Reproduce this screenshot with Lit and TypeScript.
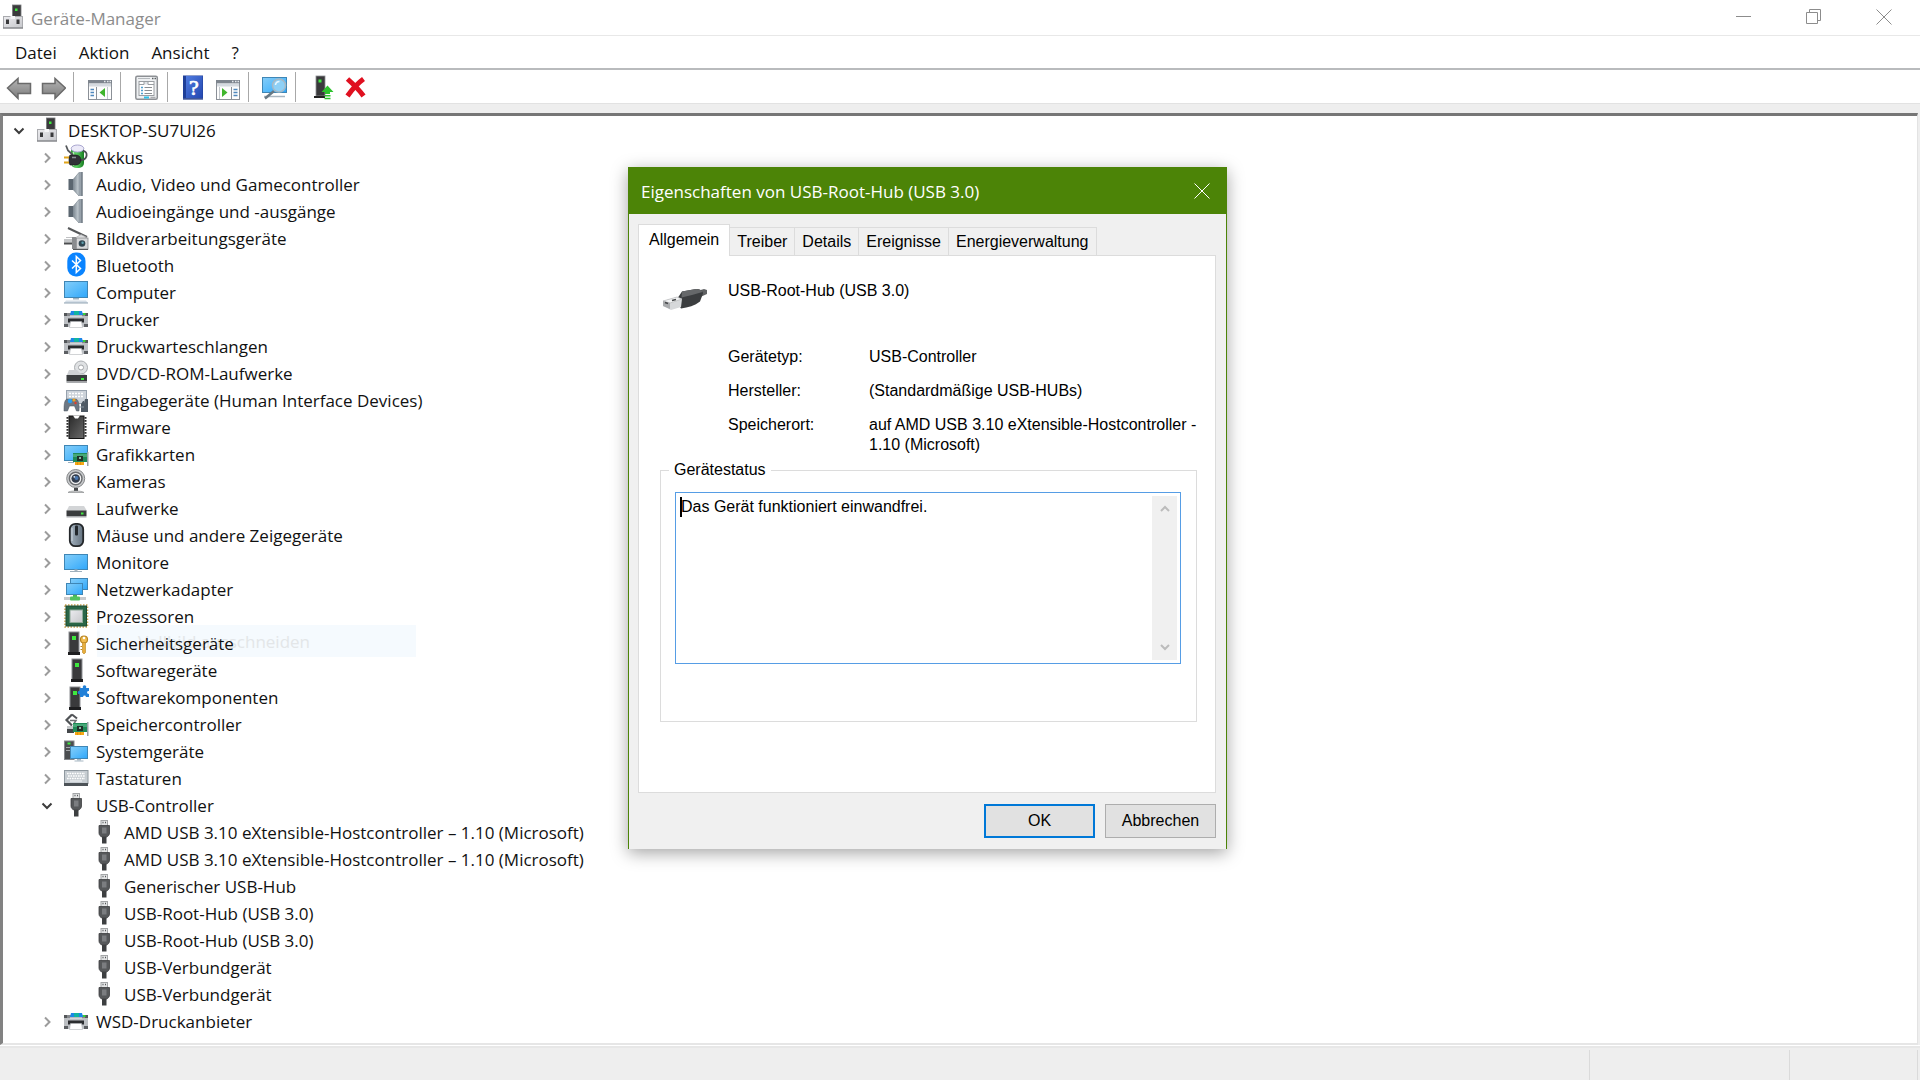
import { LitElement, html, svg, css, nothing, SVGTemplateResult, TemplateResult } from "lit";
import { customElement, state } from "lit/decorators.js";

/* ---------- shared icon parts ---------- */

const tower = (x: number, y: number): SVGTemplateResult => svg`
  <rect x=${x + 1} y=${y} width="10" height="21" fill="#3a3a3c" stroke="#8e9094"/>
  <rect x=${x} y=${y + 20} width="12" height="3" fill="#1e1e20"/>
  <rect x=${x + 4} y=${y + 4} width="4" height="4" fill="#3ee83e"/>`;

const monitor = (x: number, y: number, w: number, h: number): SVGTemplateResult => svg`
  <rect x=${x + 0.5} y=${y + 0.5} width=${w - 1} height=${h - 1} fill="url(#screen)" stroke="#3f86b5"/>`;

const card = (x: number, y: number): SVGTemplateResult => svg`
  <rect x=${x} y=${y} width="14" height="9" fill="#1f8a57"/>
  <path d=${`M${x} ${y + 1}h14v3h-14z`} fill="#46a878"/>
  <rect x=${x + 4} y=${y + 3} width="6" height="5" fill="#20302a"/>
  <rect x=${x + 6} y=${y + 4} width="2" height="2" fill="#8fb8a4"/>
  <rect x=${x + 14} y=${y - 1} width="1.5" height="14" fill="#9aa0a6"/>
  <rect x=${x + 2} y=${y + 9} width="9" height="3" fill="#f4a816"/>
  <path d=${`M${x + 4.5} ${y + 9}v3M${x + 7.5} ${y + 9}v3`} stroke="#d98200" stroke-width=".6"/>`;

/* ---------- tree icons, drawn on the full 24 x 27 row cell ---------- */

const icons: Record<string, SVGTemplateResult> = {
  pc: svg`
    <rect x="10.500" y="1" width="8.500" height="12" fill="#3b3b3d" stroke="#77797c" stroke-width=".8"/>
    <rect x="13" y="4.500" width="2.500" height="2.500" fill="#3ee83e"/>
    <rect x="1.500" y="12.500" width="19" height="11.500" fill="url(#silver)" stroke="#a9aaae"/>
    <path d="M1 24h20" stroke="#77787c"/>
    <rect x="4" y="15.500" width="3" height="4.500" fill="#3a3a3c"/>
    <rect x="14.500" y="15.500" width="3" height="4.500" fill="#3a3a3c"/>
    <path d="M8.500 12v3h4.500v-3" fill="#f6f6f8"/>`,
  battery: svg`
    <rect x="7" y="2" width="13" height="22" rx="5" fill="url(#green)"/>
    <ellipse cx="13.500" cy="4.500" rx="6.300" ry="3.500" fill="#eceaf8" stroke="#a9a6d0"/>
    <path d="M9.500 8v14" stroke="#b8f5b8" stroke-width="1.500"/>
    <path d="M2 1.500l2 5 5 4.500" fill="none" stroke="#55585c" stroke-width="1.800"/>
    <path d="M19 7c5 0 5 8-1 9h-4" fill="none" stroke="#4d5054" stroke-width="1.800"/>
    <path d="M6 11h6c3 0 5 2.500 5 5s-2 5-5 5H6l-1-2v-6z" fill="#303236" stroke="#17181a" stroke-width=".6"/>
    <path d="M8 13.500h4" stroke="#8c9096" stroke-width="1.500"/>
    <path d="M0 13.500h5M0 18.500h5" stroke="#e0a41a" stroke-width="2"/>`,
  speaker: svg`
    <rect x="4.500" y="8" width="5" height="11" fill="#5b6670"/>
    <path d="M9.500 8L15 1.500V25l-5.500-6z" fill="url(#steel)" stroke="#76828c" stroke-width=".6"/>
    <rect x="15" y="1" width="3.500" height="24" fill="#98a2ab"/>
    <path d="M18 1v24" stroke="#5d6770"/>`,
  imaging: svg`
    <path d="M4 3l19 9" stroke="#56585a" stroke-width="2"/>
    <path d="M2 12.500h10l5-3 6 3" fill="#dcdddf" stroke="#a6a8aa" stroke-width=".7"/>
    <rect x="0" y="14" width="8" height="3.500" fill="#c4c6c8"/>
    <rect x="0" y="17.500" width="8" height="2" fill="#4c4e50"/>
    <rect x="8" y="12" width="4" height="12" fill="#8a8c8f"/>
    <rect x="12.500" y="13" width="11.500" height="11" fill="#d6d7d9" stroke="#88898c" stroke-width=".8"/>
    <path d="M9 24.500h15" stroke="#55575a"/>
    <circle cx="18" cy="18.500" r="3.300" fill="#2f4550"/>
    <circle cx="18.600" cy="17.800" r="1.200" fill="#5fa0b0"/>`,
  bluetooth: svg`
    <rect x="3.300" y=".5" width="18.200" height="24" rx="8.500" fill="#0a84ff"/>
    <path d="M8 8.500l8.500 8-4.200 4V4.500l4.200 4L8 16.500" fill="none" stroke="#fff" stroke-width="1.500"/>`,
  computer: svg`
    ${monitor(0, 2, 24, 17)}
    <rect x="9" y="19" width="6" height="1.500" fill="#9fb2bf"/>
    <path d="M2 21.500h20l2 2.500H0z" fill="#d4dde6"/>
    <path d="M0 24h24" stroke="#93a5b4"/>`,
  printer: svg`
    <rect x="0" y="7" width="24" height="14" fill="#bcbfc3"/>
    <rect x="0" y="7" width="24" height="3" fill="#85888c"/>
    <rect x="0" y="7" width="3" height="3" fill="#54575a"/><rect x="21" y="7" width="3" height="3" fill="#54575a"/>
    <rect x="0" y="18" width="4" height="3" fill="#5c5f63"/><rect x="20" y="18" width="4" height="3" fill="#5c5f63"/>
    <path d="M6 9l1-4h11l1 4z" fill="#1c86e8"/>
    <path d="M10 5h5v4h-5z" fill="#12b4a0"/>
    <path d="M6 10h12" stroke="#e6eef4"/>
    <rect x="19" y="7" width="2.500" height="2" fill="#37d43b"/>
    <rect x="4" y="12.500" width="16" height="4" fill="#2b2d30"/>
    <path d="M6.500 15.500h11l1 6h-13z" fill="#fff" stroke="#b4b7ba" stroke-width=".6"/>`,
  dvd: svg`
    <circle cx="17" cy="7.500" r="6.500" fill="#dfe1e3" stroke="#a3a6a9" stroke-width=".9"/>
    <circle cx="17" cy="7.500" r="2.500" fill="#fff" stroke="#a3a6a9"/>
    <path d="M5 10h8l4 4h4l2 2H2.500z" fill="#cfd1d4"/>
    <rect x="2.500" y="15" width="20.500" height="6.500" fill="#3a3c3e"/>
    <rect x="2.500" y="21.500" width="20.500" height="1.500" fill="#a8aaad"/>
    <rect x="17" y="18" width="3" height="2" fill="#3ee83e"/>`,
  hid: svg`
    <rect x="2.500" y="3.500" width="20" height="13" fill="#cdd3da" stroke="#97a2ae"/>
    <path d="M5 6.500h15M5 9.500h15" stroke="#fff" stroke-width="1.500" stroke-dasharray="2 1"/>
    <path d="M3 12h9c3 1 3.500 7 3 12h-2.500l-2-5h-5l-2 5H0c0-5 0-11 3-12z" fill="#6c7783" stroke="#4b545e" stroke-width=".5"/>
    <circle cx="10" cy="13" r="1.600" fill="#f0a21e"/><circle cx="6" cy="14" r="2.200" fill="#2d9df0"/>
    <circle cx="11.500" cy="16" r="1.200" fill="#e03c2c"/>
    <path d="M17 25v-8l2-3h1v11zM20 25v-9l1-4h3v13z" fill="#4f5a65"/>
    <path d="M15 20h5" stroke="#8793a0"/>`,
  firmware: svg`
    <rect x="5" y="2" width="15" height="22.500" fill="url(#chip)" stroke="#141414"/>
    <path d="M9 1.500h7l-2 3h-3z" fill="#fff"/>
    <path d="M3.500 3v21M21.500 3v21" stroke="#2c2c2c" stroke-width="2" stroke-dasharray="1.700 1.300"/>`,
  display: svg`
    ${monitor(0, 4, 24, 16)}
    <path d="M4 21.500h6" stroke="#9ab0bf"/>
    ${card(9, 12)}`,
  camera: svg`
    <circle cx="11.700" cy="10.500" r="9" fill="#c9cbcd" stroke="#858789"/>
    <circle cx="11.700" cy="10.500" r="6.300" fill="#f2f2f3" stroke="#6b6d70" stroke-width="1.500"/>
    <circle cx="11.700" cy="10.500" r="4.300" fill="#333d4c"/>
    <circle cx="12.500" cy="10" r="2" fill="#4a77b0"/><circle cx="10.300" cy="8.800" r=".9" fill="#dbe9f7"/>
    <rect x="10" y="20" width="4" height="3" fill="#46484a"/>
    <path d="M4 24.500c1-2 14-2 16 0z" fill="#d7d8d9" stroke="#8e9092" stroke-width=".7"/>`,
  drive: svg`
    <path d="M5 11h15l3 5H2.500z" fill="#d3d5d7"/>
    <rect x="2.500" y="15.500" width="20" height="5.500" fill="#3a3c3e"/>
    <rect x="2.500" y="21" width="20" height="1.500" fill="#a8aaad"/>
    <rect x="17" y="17.500" width="2.500" height="2" fill="#3ee83e"/>`,
  mouse: svg`
    <rect x="5.800" y="1.800" width="13.400" height="22.400" rx="5.500" fill="url(#mouse)" stroke="#24272a" stroke-width="1.800"/>
    <rect x="11" y="3.500" width="3" height="10" rx="1" fill="#23282d"/>
    <path d="M8 6v13" stroke="#cdd6de"/>`,
  monitor: svg`
    ${monitor(0, 5, 24, 16)}
    <rect x="10.500" y="20.500" width="3" height="2" fill="#a7b7c3"/><path d="M6 22.500h12" stroke="#9fb0bc"/>`,
  network: svg`
    ${monitor(6, 2, 18, 12)}
    ${monitor(2, 7, 17, 12)}
    <rect x="9" y="19" width="4" height="3" fill="#48b854"/>
    <rect x="0" y="21" width="22" height="3" fill="#c9cbcd"/>
    <rect x="6" y="20.500" width="10" height="4" rx="1" fill="#52c25e"/>`,
  cpu: svg`
    <rect x="1" y="2" width="22.500" height="22" fill="none" stroke="#c9a04e" stroke-width="1.500" stroke-dasharray="1.500 1.500"/>
    <rect x="2" y="3" width="20.500" height="20" fill="#2a6647" stroke="#1b4d34"/>
    <rect x="6" y="7" width="12.500" height="12.500" fill="url(#silver)" stroke="#8faa9a"/>`,
  security: svg`
    ${tower(4, 2)}
    <circle cx="20" cy="9.500" r="3.500" fill="#f0bc50" stroke="#b88420" stroke-width="1.200"/>
    <circle cx="20" cy="8" r="1.200" fill="#fff"/>
    <path d="M18.500 12.500h3v10l-1.500 1.500-1.500-1.500z" fill="#e8ae3c" stroke="#b88420" stroke-width=".6"/>
    <path d="M18 16.500h-1.500M18 19.500h-1.500" stroke="#b88420"/>`,
  software: svg`${tower(7, 2)}`,
  component: svg`
    ${tower(5, 3)}
    <rect x="16" y="4" width="9" height="9" fill="#2080d8"/>
    <circle cx="20.500" cy="3" r="1.800" fill="#2080d8"/><circle cx="15.500" cy="8.500" r="1.800" fill="#2080d8"/>
    <circle cx="24.500" cy="8.500" r="1.400" fill="#fff"/><circle cx="20.500" cy="13" r="1.400" fill="#fff"/>`,
  storage: svg`
    <path d="M8 3.500L2.500 9 8 14.500" fill="none" stroke="#505356" stroke-width="2.200"/>
    <path d="M8 3.500l5 4" stroke="#505356" stroke-width="2"/>
    <path d="M6 9.500h6l-2 3" fill="none" stroke="#6f7275" stroke-width="1.500"/>
    <path d="M3 15h6v4H3z" fill="#c3c6c8"/><rect x="3" y="18" width="7" height="4" fill="#44474a"/>
    ${card(9, 12)}`,
  system: svg`
    <rect x=".5" y="3" width="9.500" height="18.500" fill="#4b4d50" stroke="#85888c"/>
    <rect x="3.500" y="4.500" width="3" height="2" fill="#3ee83e"/><path d="M2 9.500h5M2 12.500h4" stroke="#a4a7aa"/>
    ${monitor(6, 8, 18, 13)}
    <rect x="13" y="21" width="4" height="1.500" fill="#a7b7c3"/><path d="M10.500 23h9" stroke="#a7b7c3"/>`,
  keyboard: svg`
    <rect x=".5" y="5.500" width="23.500" height="13" fill="#c7cdd2" stroke="#8f989f"/>
    <path d="M3 8.500h18M4 11h17M3 13.500h18" stroke="#fff" stroke-width="1.400" stroke-dasharray="1.700 .8"/>
    <path d="M6 16h12" stroke="#f4f6f8"/>
    <rect x="0" y="18" width="24" height="3" fill="#4d5358"/>`,
  usb: svg`
    <rect x="9" y="1.500" width="6.500" height="6" fill="#e3e4e5" stroke="#a3a5a7"/>
    <path d="M10.500 3.500h1M13 3.500h1" stroke="#55575a" stroke-width="1.500"/>
    <path d="M7 6.500h10.500v7.500c0 2-1.500 3.500-3 4H10c-1.500-.5-3-2-3-4z" fill="#56585a" stroke="#3c3e40" stroke-width=".8"/>
    <rect x="10" y="8.500" width="4.500" height="6" fill="#7b7d80"/>
    <rect x="10" y="18" width="4.500" height="6.500" fill="#3d3f41"/>`,
};

/* ---------- toolbar icons on a 26 x 26 cell ---------- */

const arrow = svg`<path d="M1.500 13L12 3.500v5h12.500v10H12v5z" fill="url(#grayarrow)" stroke="#6a6a6a" stroke-width="1.500"/>`;

const pane = (toLeft: boolean): SVGTemplateResult => svg`
  <rect x="1.500" y="5.500" width="23" height="19" fill="#fdfdfd" stroke="#8b9097"/>
  <rect x="1" y="5" width="24" height="3.500" fill="#7e858e"/>
  <path d="M17 6.500h1.500M20 6.500h1.500M22.500 6.500h1.500" stroke="#e4e8ec" stroke-width="1.500"/>
  <rect x="2" y="8.500" width="22" height="3" fill="#d5dae0"/>
  <path d=${toLeft ? "M9.500 12v12" : "M16.500 12v12"} stroke="#8b9097"/>
  <path d=${toLeft ? "M3.500 14.500H7M3.500 17.500H7M3.500 20.500H7" : "M18.500 14.500h4M18.500 17.500h4M18.500 20.500h4"} stroke="#4f88bd" stroke-width="1.500"/>
  <path d=${toLeft ? "M18 13v9l-5.500-4.500z" : "M7 13v9l5.500-4.500z"} fill="#3fb52c"/>
  ${toLeft ? svg`<path d="M20.500 12v12" stroke="#c2c7cc"/>` : svg`<path d="M4.500 12v12" stroke="#c2c7cc"/>`}`;

const tools: Record<string, SVGTemplateResult> = {
  back: arrow,
  forward: svg`<g transform="matrix(-1 0 0 1 27 0)">${arrow}</g>`,
  paneLeft: pane(true),
  paneRight: pane(false),
  properties: svg`
    <rect x="1.800" y="1.300" width="21.500" height="23" rx="1.500" fill="#eef0f2" stroke="#8d9094" stroke-width="1.500"/>
    <path d="M4 3.500h12" stroke="#b5b9bd"/><path d="M18 3.500h1.500M20.500 3.500H22" stroke="#5c6064" stroke-width="1.500"/>
    <rect x="5" y="6.500" width="15" height="14" fill="#fff" stroke="#9a9ea2"/>
    <path d="M5 9.500h5V6.500h4v3h6" fill="#dfe2e5" stroke="#9a9ea2"/>
    <path d="M7 12.500h2M7 15.500h2M7 18.500h2" stroke="#4f9fd0" stroke-width="1.300"/>
    <path d="M10.500 12.500H18M10.500 15.500H18M10.500 18.500H18" stroke="#8a8e92"/>
    <path d="M10 22.500h5" stroke="#29c0ea" stroke-width="2"/><path d="M16.500 22.500h5" stroke="#aaadb0" stroke-width="1.500"/>`,
  help: svg`
    <rect x="2" y=".5" width="20" height="24" fill="#1f3f98"/>
    <rect x="5" y="1" width="16.500" height="22" fill="url(#book)"/>
    <path d="M2 24h20" stroke="#5f6f9f"/>
    <text x="13" y="20" text-anchor="middle" font-family="Liberation Serif, serif" font-size="22" fill="#fff" stroke="#fff" stroke-width=".7">?</text>`,
  scan: svg`
    ${monitor(0, 2, 25, 16)}
    <path d="M2 21.500h21" stroke="#a9b6c0" stroke-width="1.500"/>
    <path d="M12 16L3 23.500" stroke="#687883" stroke-width="2.500"/>
    <circle cx="17" cy="10.500" r="6.500" fill="#8ed0f6" stroke="#a5b9c6" stroke-width="1.500"/>
    <path d="M13.500 10a4 4 0 0 1 4-3.500" fill="none" stroke="#e8f7ff" stroke-width="1.500"/>`,
  update: svg`
    <rect x="7" y="1" width="9" height="20" fill="#39393b" stroke="#8e9094" stroke-width=".8"/>
    <rect x="9.500" y="4.500" width="3" height="3" fill="#3ee83e"/>
    <rect x="5" y="21" width="11" height="2" fill="#222"/>
    <path d="M18.500 10.500l6 6.500h-3.500v2h-5v-2h-3.500z" fill="#2dc22d"/>
    <path d="M15.500 20.800h6M15.500 23.500h6" stroke="#2dc22d" stroke-width="1.600"/>`,
  remove: svg`
    <path d="M4.500 4C9 8 17 16 20.500 21M20.500 4C15 8 8 16 4.500 21" fill="none" stroke="#e01020" stroke-width="5"/>`,
};

const toolGroups: { id: string; label: string }[][] = [
  [{ id: "back", label: "Zurück" }, { id: "forward", label: "Vorwärts" }],
  [{ id: "paneLeft", label: "Konsolenstruktur" }],
  [{ id: "properties", label: "Eigenschaften" }],
  [{ id: "help", label: "Hilfe" }, { id: "paneRight", label: "Aktionsbereich" }],
  [{ id: "scan", label: "Nach geänderter Hardware suchen" }],
  [{ id: "update", label: "Treiber aktualisieren" }, { id: "remove", label: "Gerät deinstallieren" }],
];

/* ---------- device tree ---------- */

interface Device { name: string; icon: string; open?: boolean; children?: Device[]; leaf?: boolean; }

const usb = (name: string): Device => ({ name, icon: "usb", leaf: true });

const devices: Device = {
  name: "DESKTOP-SU7UI26", icon: "pc", open: true, children: [
    { name: "Akkus", icon: "battery" },
    { name: "Audio, Video und Gamecontroller", icon: "speaker" },
    { name: "Audioeingänge und -ausgänge", icon: "speaker" },
    { name: "Bildverarbeitungsgeräte", icon: "imaging" },
    { name: "Bluetooth", icon: "bluetooth" },
    { name: "Computer", icon: "computer" },
    { name: "Drucker", icon: "printer" },
    { name: "Druckwarteschlangen", icon: "printer" },
    { name: "DVD/CD-ROM-Laufwerke", icon: "dvd" },
    { name: "Eingabegeräte (Human Interface Devices)", icon: "hid" },
    { name: "Firmware", icon: "firmware" },
    { name: "Grafikkarten", icon: "display" },
    { name: "Kameras", icon: "camera" },
    { name: "Laufwerke", icon: "drive" },
    { name: "Mäuse und andere Zeigegeräte", icon: "mouse" },
    { name: "Monitore", icon: "monitor" },
    { name: "Netzwerkadapter", icon: "network" },
    { name: "Prozessoren", icon: "cpu" },
    { name: "Sicherheitsgeräte", icon: "security" },
    { name: "Softwaregeräte", icon: "software" },
    { name: "Softwarekomponenten", icon: "component" },
    { name: "Speichercontroller", icon: "storage" },
    { name: "Systemgeräte", icon: "system" },
    { name: "Tastaturen", icon: "keyboard" },
    {
      name: "USB-Controller", icon: "usb", open: true, children: [
        usb("AMD USB 3.10 eXtensible-Hostcontroller – 1.10 (Microsoft)"),
        usb("AMD USB 3.10 eXtensible-Hostcontroller – 1.10 (Microsoft)"),
        usb("Generischer USB-Hub"),
        usb("USB-Root-Hub (USB 3.0)"),
        usb("USB-Root-Hub (USB 3.0)"),
        usb("USB-Verbundgerät"),
        usb("USB-Verbundgerät"),
      ],
    },
    { name: "WSD-Druckanbieter", icon: "printer" },
  ],
};

const closeGlyph = html`<svg class="glyph" viewBox="0 0 16 16" aria-hidden="true"><path d="M.5.5l15 15M15.500.5l-15 15"/></svg>`;

@customElement("app-root")
export class AppRoot extends LitElement {
  @state() private tab = "Allgemein";

  static styles = css`
    :host {
      display: flex; flex-direction: column; min-height: 100vh; position: relative;
      box-sizing: border-box; background: #fff; color: #111;
      font: 17px/27px "Open Sans", "Noto Sans", sans-serif;
    }
    *, *::before, *::after { box-sizing: border-box; }
    button { font: inherit; color: inherit; background: none; border: 0; padding: 0; margin: 0; }
    svg { display: block; }
    .defs { position: absolute; width: 0; height: 0; }

    .titlebar { display: flex; align-items: center; height: 36px; border-bottom: 1px solid #e8e8e8; color: #8c8c8c; }
    .titlebar h1 { flex: 1; margin: 0; padding-top: 2px; font-size: 17px; font-weight: 400; }
    .app-icon { width: 24px; height: 27px; margin: 0 5px 0 2px; }
    .controls { display: flex; align-self: flex-start; padding-right: 1px; }
    .controls button { width: 70px; height: 33px; display: grid; place-items: center; }
    .glyph { width: 16px; height: 16px; fill: none; stroke: currentColor; }

    .menubar { display: flex; height: 34px; padding-left: 4px; border-bottom: 2px solid #b9bbbd; }
    .menubar button { padding: 0 11px; line-height: 34px; }

    .toolbar { display: flex; height: 33px; padding: 2px 0 1px; }
    .tool-group { display: flex; align-items: center; gap: 8px; padding: 2px 7px 0 13px; border-right: 1px solid #a8a8a8; }
    .tool-group:first-child { padding-left: 6px; }
    .tool-group:last-child { border-right: 0; }
    .tool-group svg { width: 26px; height: 26px; }

    .workspace { flex: 1; display: flex; background: #eee; border-top: 1px solid #e2e2e2; padding: 9px 2px 0 0; }
    .tree-pane {
      flex: 1; position: relative; background: #fff; padding: 1px 0 8px;
      border-style: solid; border-width: 3px 1px 2px 3px;
      border-color: #767676 #e3e3e3 #e6e6e6 #828282;
    }
    .tree, .tree ul { list-style: none; margin: 0; padding: 0; }
    .tree { padding-left: 8px; }
    .tree ul { padding-left: 28px; }
    .row { display: flex; align-items: center; height: 27px; gap: 8px; }
    .row .name { white-space: nowrap; }
    .twist { width: 16px; height: 27px; flex: none; display: grid; place-items: center; color: #9c9c9c; }
    .row .twist { margin-right: 1px; }
    .twist.open { color: #3c3c3c; }
    .twist svg { width: 12px; height: 12px; fill: none; stroke: currentColor; stroke-width: 2; }
    .dev { width: 24px; height: 27px; flex: none; overflow: visible; }

    .fading-item {
      position: absolute; left: 94px; top: 509px; width: 319px; height: 32px;
      padding-left: 41px; text-align: left; background: #f5fafe; color: #e3e6e8;
    }
    .rows { position: relative; }

    .statusbar { display: flex; height: 35px; padding: 4px 2px 0 0; background: #eee; border-top: 1px solid #fff; box-shadow: inset 0 2px #e7e7e7; }
    .statusbar .cell { border-right: 1px solid #dadada; flex: 1; }
    .statusbar .cell.mid { flex: 0 0 200px; }
    .statusbar .cell.end { flex: 0 0 128px; }
    .taskbar-edge { display: flex; height: 2px; background: #0e0f14; padding-left: 72px; }
    .taskbar-edge span { width: 516px; background: #bdbdbd; }

    .dialog {
      position: absolute; left: 628px; top: 167px; width: 599px; height: 682px;
      display: flex; flex-direction: column;
      background: #f0f0f0; border: 1px solid #4c8407; border-bottom: 0;
      box-shadow: 0 4px 16px rgba(0, 0, 0, .36);
      color: #000; font: 16px/20px "Liberation Sans", Arial, sans-serif;
    }
    .dialog-title { display: flex; align-items: center; height: 46px; flex: none; padding: 0 16px 0 12px; background: #4c8407; color: #fff; }
    .dialog-title h2 { flex: 1; margin: 0; font: 17px/27px "Open Sans", "Noto Sans", sans-serif; }
    .dialog-body { flex: 1; display: flex; flex-direction: column; padding: 10px 10px 11px 9px; }
    .tabs { display: flex; align-items: flex-end; }
    .tabs button { height: 28px; padding: 1px 7px 0; border: 1px solid #dcdcdc; border-width: 1px 1px 0 0; }
    .tabs button.active {
      height: 32px; margin-bottom: -1px; padding: 0 10px 2px; position: relative;
      background: #fff; border-left-width: 1px;
    }
    .page { flex: 1; display: flex; flex-direction: column; background: #fff; border: 1px solid #dcdcdc; padding: 25px 18px 70px 21px; }
    .device { display: flex; align-items: flex-start; }
    .device svg { width: 48px; height: 32px; margin: 3px 20px 0 0; }
    .facts { display: grid; grid-template-columns: 141px 1fr; row-gap: 14px; margin: 31px 0 0 68px; }
    .facts dt, .facts dd { margin: 0; white-space: nowrap; }
    .facts dd.wrap { white-space: pre-line; }
    .status { flex: 1; min-width: 0; margin: 5px 0 0; padding: 12px 15px 0 14px; border: 1px solid #dcdcdc; }
    .status legend { padding: 0 5px; margin-left: -6px; line-height: 20px; }
    .box { position: relative; display: flex; height: 172px; border: 1px solid #569de5; padding: 3px; }
    .box textarea {
      flex: 1; min-width: 0; resize: none; border: 0; outline: 0; overflow: hidden;
      margin: 0; padding: 1px 2px; background: #fff; color: #000; font: inherit;
    }
    .caret { position: absolute; left: 4px; top: 4px; width: 2px; height: 20px; background: #000; }
    .scroll { width: 25px; display: flex; flex-direction: column; justify-content: space-between; background: #f0f0f0; color: #bcbcbc; }
    .scroll button { height: 26px; display: grid; place-items: center; }
    .scroll svg { width: 12px; height: 12px; fill: none; stroke: currentColor; stroke-width: 2; }
    .actions { display: flex; justify-content: flex-end; gap: 10px; padding-top: 11px; }
    .actions button { width: 111px; height: 34px; background: #e1e1e1; border: 1px solid #adadad; }
    .actions button.default { border: 2px solid #0078d7; }
  `;

  private icon(id: string, cls = "dev"): TemplateResult {
    return html`<svg class=${cls} viewBox="0 0 24 27" aria-hidden="true">${icons[id]}</svg>`;
  }

  private toggle(d: Device) {
    d.open = !d.open;
    this.requestUpdate();
  }

  private node(d: Device): TemplateResult {
    return html`<li>
      <div class="row">
        ${d.leaf
          ? html`<span class="twist"></span>`
          : html`<button class="twist ${d.open ? "open" : ""}" aria-label=${d.name} aria-expanded=${d.open ? "true" : "false"} @click=${() => this.toggle(d)}>
              <svg viewBox="0 0 12 12" aria-hidden="true"><path d=${d.open ? "M1.500 3.500L6 8l4.500-4.500" : "M4 1.500L8.500 6 4 10.500"}></path></svg>
            </button>`}
        ${this.icon(d.icon)}
        <span class="name">${d.name}</span>
      </div>
      ${d.open && d.children ? html`<ul>${d.children.map((c) => this.node(c))}</ul>` : nothing}
    </li>`;
  }

  private dialog(): TemplateResult {
    const tabs = ["Allgemein", "Treiber", "Details", "Ereignisse", "Energieverwaltung"];
    return html`<section class="dialog" role="dialog" aria-labelledby="dlg-title">
      <header class="dialog-title">
        <h2 id="dlg-title">Eigenschaften von USB-Root-Hub (USB 3.0)</h2>
        <button aria-label="Schließen">${closeGlyph}</button>
      </header>
      <div class="dialog-body">
        <div class="tabs" role="tablist">
          ${tabs.map((t) => html`<button role="tab" aria-selected=${this.tab === t ? "true" : "false"}
            class=${this.tab === t ? "active" : ""} @click=${() => (this.tab = t)}>${t}</button>`)}
        </div>
        <div class="page" role="tabpanel">
          <div class="device">
            <svg viewBox="0 0 48 32" aria-hidden="true">
              <path d="M34 8l10-3 3 1v4l-9 4z" fill="#606264"/>
              <path d="M22 7.500l14-2.500c4 0 7 2 7 4.500l-3 8c-5 4-12 6-19 7l-5-8z" fill="#3b3d3f"/>
              <path d="M22 7.500l14-2.500c4 0 6 1.500 6.500 3-7 2-14 4-21 5.500z" fill="#66686a"/>
              <path d="M3 17l14-4 5 2-1 8-10 3-8-4z" fill="#d6d8da"/>
              <path d="M3 17l14-4 5 2-12 4z" fill="#f1f2f3" stroke="#aeb0b2" stroke-width=".6"/>
              <path d="M3 17l7 2v6l-7-3z" fill="#a9abad"/>
              <path d="M5 18.500l3 1M12 16.500l4-1" stroke="#444648" stroke-width="1.500"/>
            </svg>
            <span>USB-Root-Hub (USB 3.0)</span>
          </div>
          <dl class="facts">
            <dt>Gerätetyp:</dt><dd>USB-Controller</dd>
            <dt>Hersteller:</dt><dd>(Standardmäßige USB-HUBs)</dd>
            <dt>Speicherort:</dt><dd class="wrap">${"auf AMD USB 3.10 eXtensible-Hostcontroller -\n1.10 (Microsoft)"}</dd>
          </dl>
          <fieldset class="status">
            <legend><label for="device-status">Gerätestatus</label></legend>
            <div class="box">
              <textarea id="device-status" readonly .value=${"Das Gerät funktioniert einwandfrei."}></textarea>
              <span class="caret"></span>
              <div class="scroll">
                <button aria-label="Nach oben"><svg viewBox="0 0 12 12" aria-hidden="true"><path d="M2 8l4-4 4 4"/></svg></button>
                <button aria-label="Nach unten"><svg viewBox="0 0 12 12" aria-hidden="true"><path d="M2 4l4 4 4-4"/></svg></button>
              </div>
            </div>
          </fieldset>
        </div>
        <div class="actions">
          <button class="default">OK</button>
          <button>Abbrechen</button>
        </div>
      </div>
    </section>`;
  }

  render() {
    return html`
      <svg class="defs" aria-hidden="true"><defs>
        <linearGradient id="screen" x1="0" y1="0" x2="1" y2="1"><stop offset="0" stop-color="#84cdf9"/><stop offset=".5" stop-color="#5bbcfa"/><stop offset="1" stop-color="#2ea6fb"/></linearGradient>
        <linearGradient id="silver" x1="0" y1="0" x2="1" y2="1"><stop offset="0" stop-color="#ececef"/><stop offset="1" stop-color="#c6c7cb"/></linearGradient>
        <linearGradient id="green"><stop offset="0" stop-color="#2f9e36"/><stop offset=".4" stop-color="#5fd465"/><stop offset="1" stop-color="#167a20"/></linearGradient>
        <linearGradient id="steel"><stop offset="0" stop-color="#808b94"/><stop offset="1" stop-color="#cbd3d9"/></linearGradient>
        <linearGradient id="chip" x1="0" y1="0" x2="1" y2="1"><stop offset="0" stop-color="#2a2a2a"/><stop offset="1" stop-color="#6a6a6a"/></linearGradient>
        <linearGradient id="mouse"><stop offset="0" stop-color="#a4b2bf"/><stop offset="1" stop-color="#64727f"/></linearGradient>
        <linearGradient id="grayarrow" x1="0" y1="0" x2="0" y2="1"><stop offset="0" stop-color="#b4b4b4"/><stop offset="1" stop-color="#7c7c7c"/></linearGradient>
        <linearGradient id="book" x1="0" y1="0" x2="1" y2="1"><stop offset="0" stop-color="#4f7be0"/><stop offset="1" stop-color="#2347b0"/></linearGradient>
      </defs></svg>

      <header class="titlebar">
        ${this.icon("pc", "app-icon")}
        <h1>Geräte-Manager</h1>
        <div class="controls">
          <button aria-label="Minimieren"><svg class="glyph" viewBox="0 0 16 16" aria-hidden="true"><path d="M0 7.500h15"/></svg></button>
          <button aria-label="Verkleinern"><svg class="glyph" viewBox="0 0 16 16" aria-hidden="true"><path d="M.5 3.500h11v11H.5zM3.500 3V.5h11v11H12"/></svg></button>
          <button aria-label="Fenster schließen">${closeGlyph}</button>
        </div>
      </header>

      <nav class="menubar">
        ${["Datei", "Aktion", "Ansicht", "?"].map((m) => html`<button>${m}</button>`)}
      </nav>

      <div class="toolbar" role="toolbar">
        ${toolGroups.map((g) => html`<div class="tool-group">
          ${g.map((t) => html`<button aria-label=${t.label}><svg viewBox="0 0 26 26" aria-hidden="true">${tools[t.id]}</svg></button>`)}
        </div>`)}
      </div>

      <main class="workspace">
        <div class="tree-pane">
          <button class="fading-item" tabindex="-1">Vollbild ausschneiden</button>
          <div class="rows"><ul class="tree">${this.node(devices)}</ul></div>
        </div>
      </main>

      <footer class="statusbar"><div class="cell"></div><div class="cell mid"></div><div class="cell end"></div></footer>
      <div class="taskbar-edge"><span></span></div>

      ${this.dialog()}
    `;
  }
}
